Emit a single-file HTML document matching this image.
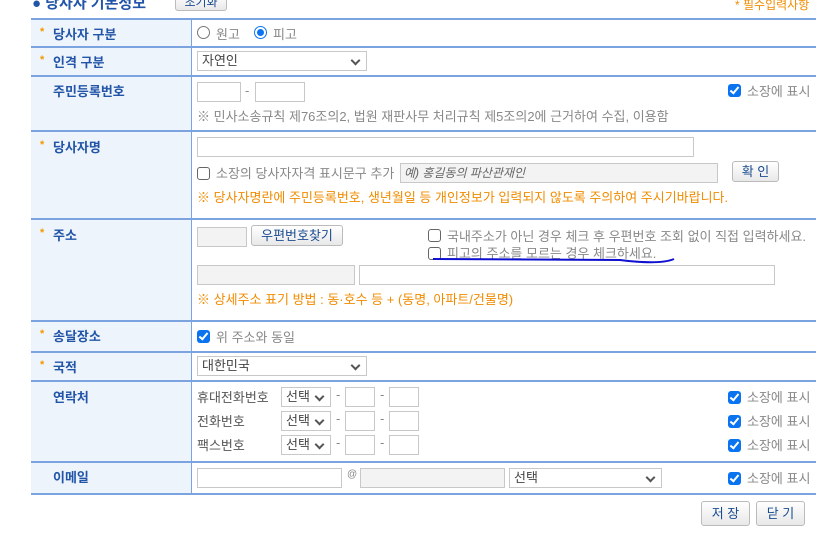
<!DOCTYPE html>
<html><head><meta charset="utf-8"><style>
*{margin:0;padding:0;box-sizing:border-box}
body{width:828px;height:539px;background:#fff;position:relative;overflow:hidden;font-family:"Liberation Sans","Noto Sans CJK KR","NanumGothic",sans-serif;font-size:13px;color:#888}
.a{position:absolute;white-space:nowrap}
.lab{position:absolute;left:31px;width:161px;background:#eef4fb;border-right:1px solid #7aa3e0}
.hl{position:absolute;left:31px;width:785px;height:2px;background:#7aa3e0}
.lt{position:absolute;left:53px;color:#2255a8;font-weight:bold;font-size:13px}
.st{position:absolute;left:40px;color:#f39800;font-size:11px;font-weight:bold}
.in{position:absolute;border:1px solid #c8c8c8;background:#fff;height:20px}
.g{background:#f3f3f3}
.sel{position:absolute;border:1px solid #c8c8c8;background:#fff;height:20px;color:#444;padding-left:4px;line-height:18px}
.sel:after{content:"";position:absolute;right:7px;top:5px;width:5px;height:5px;border-right:2px solid #555;border-bottom:2px solid #555;transform:rotate(45deg)}
.cb{position:absolute;width:13px;height:13px;border-radius:3px;background:#0a74f0}
.cb:after{content:"";position:absolute;left:4px;top:1px;width:3px;height:7px;border-right:2px solid #fff;border-bottom:2px solid #fff;transform:rotate(40deg)}
.cu{position:absolute;width:13px;height:13px;border-radius:3px;border:1px solid #666;background:#fff}
.btn{position:absolute;border:1px solid #bbb;border-radius:3px;background:linear-gradient(#fff,#e8e8e8);color:#1a4c90;text-align:center}
.o{color:#f08c00}
</style></head><body>
<div class="a" style="left:32px;top:-8px;color:#2255a8;font-size:15px;font-weight:bold">● 당사자 기본정보</div>
<div class="btn" style="left:175px;top:-6px;width:52px;height:17px;font-size:12px;line-height:14px">초기화</div>
<div class="a o" style="left:735px;top:-4px;font-size:12px">* 필수입력사항</div>

<div class="lab" style="top:18px;height:477px"></div>
<div class="hl" style="top:18px"></div>
<div class="hl" style="top:46px"></div>
<div class="hl" style="top:75px"></div>
<div class="hl" style="top:130px"></div>
<div class="hl" style="top:218px"></div>
<div class="hl" style="top:320px"></div>
<div class="hl" style="top:351px"></div>
<div class="hl" style="top:380px"></div>
<div class="hl" style="top:461px"></div>
<div class="hl" style="top:493px"></div>

<div class="st" style="top:26px">*</div><div class="lt" style="top:24px">당사자 구분</div>
<div class="st" style="top:54px">*</div><div class="lt" style="top:52px">인격 구분</div>
<div class="lt" style="top:81px">주민등록번호</div>
<div class="st" style="top:139px">*</div><div class="lt" style="top:137px">당사자명</div>
<div class="st" style="top:227px">*</div><div class="lt" style="top:225px">주소</div>
<div class="st" style="top:328px">*</div><div class="lt" style="top:326px">송달장소</div>
<div class="st" style="top:359px">*</div><div class="lt" style="top:357px">국적</div>
<div class="lt" style="top:387px">연락처</div>
<div class="lt" style="top:467px">이메일</div>

<!-- 당사자 구분 -->
<div class="a" style="left:197px;top:26px;width:13px;height:13px;border:1px solid #777;border-radius:50%"></div>
<div class="a" style="left:216px;top:24px">원고</div>
<div class="a" style="left:254px;top:26px;width:13px;height:13px;border:1px solid #0a74f0;border-radius:50%"><div style="margin:2px;width:7px;height:7px;border-radius:50%;background:#0a74f0"></div></div>
<div class="a" style="left:273px;top:24px">피고</div>
<!-- 인격 -->
<div class="sel" style="left:197px;top:51px;width:170px">자연인</div>
<!-- 주민 -->
<div class="in" style="left:197px;top:82px;width:44px"></div>
<div class="a" style="left:245px;top:83px">-</div>
<div class="in" style="left:255px;top:82px;width:50px"></div>
<div class="cb" style="left:728px;top:84px"></div><div class="a" style="left:747px;top:81px">소장에 표시</div>
<div class="a" style="left:197px;top:106px">※ 민사소송규칙 제76조의2, 법원 재판사무 처리규칙 제5조의2에 근거하여 수집, 이용함</div>
<!-- 당사자명 -->
<div class="in" style="left:197px;top:137px;width:497px"></div>
<div class="cu" style="left:197px;top:167px"></div>
<div class="a" style="left:216px;top:163px">소장의 당사자자격 표시문구 추가</div>
<div class="in g" style="left:400px;top:163px;width:318px;font-style:italic;color:#666;font-size:12px;padding-left:3px;line-height:18px">예) 홍길동의 파산관재인</div>
<div class="btn" style="left:732px;top:161px;width:47px;height:21px;line-height:19px">확 인</div>
<div class="a o" style="left:197px;top:187px">※ 당사자명란에 주민등록번호, 생년월일 등 개인정보가 입력되지 않도록 주의하여 주시기바랍니다.</div>
<!-- 주소 -->
<div class="in g" style="left:197px;top:227px;width:50px"></div>
<div class="btn" style="left:251px;top:225px;width:92px;height:21px;line-height:19px">우편번호찾기</div>
<div class="cu" style="left:428px;top:229px"></div>
<div class="a" style="left:447px;top:226px">국내주소가 아닌 경우 체크 후 우편번호 조회 없이 직접 입력하세요.</div>
<div class="cu" style="left:428px;top:247px"></div>
<div class="a" style="left:447px;top:243px">피고의 주소를 모르는 경우 체크하세요.</div>
<svg class="a" style="left:430px;top:255px" width="250" height="12"><path d="M3 4 L190 5 Q230 10 244 4" stroke="#1010d0" stroke-width="2" fill="none"/></svg>
<div class="in g" style="left:197px;top:265px;width:158px"></div>
<div class="in" style="left:359px;top:265px;width:416px"></div>
<div class="a o" style="left:197px;top:289px">※ 상세주소 표기 방법 : 동·호수 등 + (동명, 아파트/건물명)</div>
<!-- 송달 -->
<div class="cb" style="left:197px;top:330px"></div><div class="a" style="left:216px;top:327px">위 주소와 동일</div>
<div class="sel" style="left:197px;top:356px;width:170px">대한민국</div>
<!-- 연락처 -->
<div class="a" style="left:197px;top:387px;color:#555">휴대전화번호</div>
<div class="a" style="left:197px;top:411px;color:#555">전화번호</div>
<div class="a" style="left:197px;top:435px;color:#555">팩스번호</div>
<div class="sel" style="left:281px;top:387px;width:50px">선택</div>
<div class="sel" style="left:281px;top:411px;width:50px">선택</div>
<div class="sel" style="left:281px;top:435px;width:50px">선택</div>
<div class="a" style="left:336px;top:387px">-</div><div class="in" style="left:345px;top:387px;width:30px"></div>
<div class="a" style="left:380px;top:387px">-</div><div class="in" style="left:389px;top:387px;width:30px"></div>
<div class="a" style="left:336px;top:411px">-</div><div class="in" style="left:345px;top:411px;width:30px"></div>
<div class="a" style="left:380px;top:411px">-</div><div class="in" style="left:389px;top:411px;width:30px"></div>
<div class="a" style="left:336px;top:435px">-</div><div class="in" style="left:345px;top:435px;width:30px"></div>
<div class="a" style="left:380px;top:435px">-</div><div class="in" style="left:389px;top:435px;width:30px"></div>
<div class="cb" style="left:728px;top:391px"></div><div class="a" style="left:747px;top:387px">소장에 표시</div>
<div class="cb" style="left:728px;top:415px"></div><div class="a" style="left:747px;top:411px">소장에 표시</div>
<div class="cb" style="left:728px;top:439px"></div><div class="a" style="left:747px;top:435px">소장에 표시</div>
<!-- 이메일 -->
<div class="in" style="left:197px;top:468px;width:145px"></div>
<div class="a" style="left:347px;top:469px;font-size:10px">@</div>
<div class="in g" style="left:360px;top:468px;width:145px"></div>
<div class="sel" style="left:509px;top:468px;width:153px">선택</div>
<div class="cb" style="left:728px;top:472px"></div><div class="a" style="left:747px;top:468px">소장에 표시</div>
<!-- buttons -->
<div class="btn" style="left:701px;top:501px;width:49px;height:25px;line-height:23px">저 장</div>
<div class="btn" style="left:756px;top:501px;width:49px;height:25px;line-height:23px">닫 기</div>
</body></html>
